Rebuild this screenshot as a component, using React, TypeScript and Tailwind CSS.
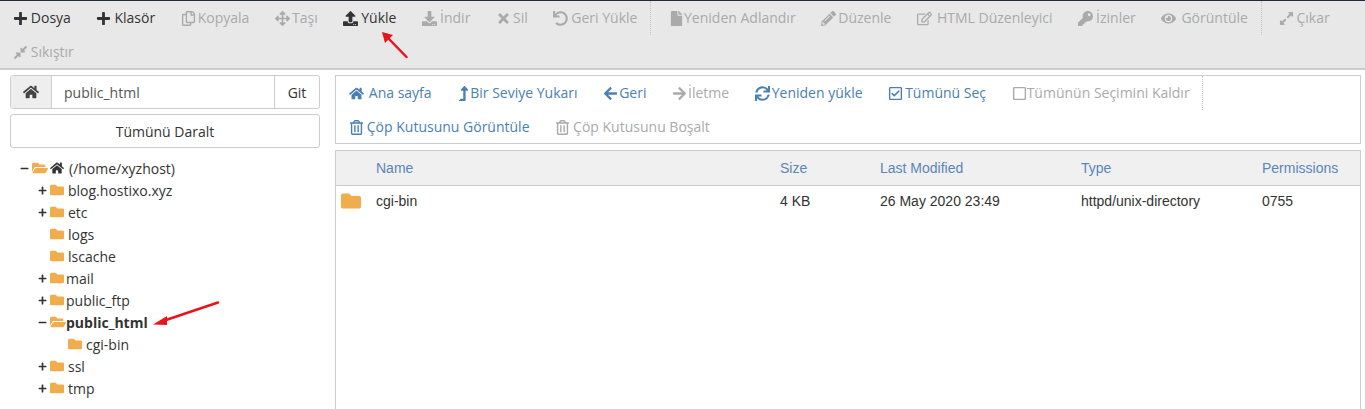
import React from "react";
import {
  FaArrowLeft,
  FaArrowRight,
  FaArrowsAlt,
  FaCompressAlt,
  FaDownload,
  FaExpandAlt,
  FaEye,
  FaFile,
  FaFolder,
  FaFolderOpen,
  FaHome,
  FaKey,
  FaLevelUpAlt,
  FaMinus,
  FaPencilAlt,
  FaPlus,
  FaRegCheckSquare,
  FaRegCopy,
  FaRegEdit,
  FaRegSquare,
  FaRegTrashAlt,
  FaSync,
  FaTimes,
  FaUndo,
  FaUpload,
} from "react-icons/fa";

type Item = { icon: React.ElementType; label: string; on?: boolean; w: number };

const topRow: Item[] = [
  { icon: FaPlus, label: "Dosya", on: true, w: 18 },
  { icon: FaPlus, label: "Klasör", on: true, w: 18 },
  { icon: FaRegCopy, label: "Kopyala", w: 17 },
  { icon: FaArrowsAlt, label: "Taşı", w: 17 },
  { icon: FaUpload, label: "Yükle", on: true, w: 18 },
  { icon: FaDownload, label: "İndir", w: 18 },
  { icon: FaTimes, label: "Sil", w: 17 },
  { icon: FaUndo, label: "Geri Yükle", w: 18 },
];
const topRow2: Item[] = [
  { icon: FaFile, label: "Yeniden Adlandır", w: 15 },
  { icon: FaPencilAlt, label: "Düzenle", w: 17 },
  { icon: FaRegEdit, label: "HTML Düzenleyici", w: 20 },
  { icon: FaKey, label: "İzinler", w: 18 },
  { icon: FaEye, label: "Görüntüle", w: 20 },
];

const navRow: Item[] = [
  { icon: FaHome, label: "Ana sayfa", on: true, w: 20 },
  { icon: FaLevelUpAlt, label: "Bir Seviye Yukarı", on: true, w: 13 },
  { icon: FaArrowLeft, label: "Geri", on: true, w: 16 },
  { icon: FaArrowRight, label: "İletme", w: 16 },
  { icon: FaSync, label: "Yeniden yükle", on: true, w: 17 },
  { icon: FaRegCheckSquare, label: "Tümünü Seç", on: true, w: 17 },
  { icon: FaRegSquare, label: "Tümünün Seçimini Kaldır", w: 15 },
];

const tree = [
  { label: "blog.hostixo.xyz", w: 18, plus: true },
  { label: "etc", w: 18, plus: true },
  { label: "logs", w: 18 },
  { label: "lscache", w: 18 },
  { label: "mail", w: 16, plus: true },
  { label: "public_ftp", w: 16, plus: true },
];

const ToolBtn = ({ item, color }: { item: Item; color: string }) => {
  const Icon = item.icon;
  return (
    <div className={`flex h-[34px] items-center px-[12.8px] text-[14px] leading-none ${item.on ? color : "text-[#aaaaaa]"}`}>
      <span className="flex shrink-0 items-center" style={{ width: item.w }}>
        <Icon className="text-[15px]" />
      </span>
      <span>{item.label}</span>
    </div>
  );
};

const Sep = () => <div className="mr-[5px] h-[34px] border-r border-dotted border-[#c4c4c4]" />;

const TreeRow = ({ label, w, plus }: { label: string; w: number; plus?: boolean }) => (
  <div className="flex h-[22px] items-center pl-[28px]">
    <span className="flex w-[12px] shrink-0 items-center">{plus && <FaPlus className="text-[9px] text-[#333333]" />}</span>
    <FaFolder className="shrink-0 text-[14px] text-[#f0ad4e]" />
    <span style={{ marginLeft: w - 14 }}>{label}</span>
  </div>
);

export default function App() {
  return (
    <div className="h-[409px] overflow-hidden bg-white font-['Open_Sans',sans-serif] text-[14px] text-[#333333]">
      {/* top toolbar */}
      <div className="flex h-[70px] flex-wrap content-start border-t border-b-2 border-t-[#1f2a3a] border-b-[#cccccc] bg-[#e8e8e8]">
        {topRow.map((item) => (
          <ToolBtn key={item.label} item={item} color="text-[#333333]" />
        ))}
        <Sep />
        {topRow2.map((item) => (
          <ToolBtn key={item.label} item={item} color="text-[#333333]" />
        ))}
        <Sep />
        <ToolBtn item={{ icon: FaExpandAlt, label: "Çıkar", w: 17 }} color="" />
        <ToolBtn item={{ icon: FaCompressAlt, label: "Sıkıştır", w: 18 }} color="" />
      </div>

      <div className="flex pt-[5px]">
        {/* left column */}
        <div className="ml-[10px] w-[310px] shrink-0">
          <div className="flex h-[34px] rounded-[3px] border border-[#cccccc]">
            <div className="flex w-[41px] items-center justify-center border-r border-[#cccccc] bg-[#eeeeee]">
              <FaHome className="text-[16px] text-[#444444]" />
            </div>
            <div className="flex flex-1 items-center pl-[12px] text-[#555555]">public_html</div>
            <div className="flex w-[45px] items-center justify-center border-l border-[#cccccc]">Git</div>
          </div>
          <div className="mt-[5px] flex h-[34px] items-center justify-center rounded-[3px] border border-[#cccccc]">Tümünü Daralt</div>

          <div className="mt-[9px]">
            <div className="flex h-[22px] items-center pl-[10px]">
              <FaMinus className="w-[12px] shrink-0 pr-[3px] text-[9px]" />
              <FaFolderOpen className="shrink-0 text-[16px] text-[#f0ad4e]" />
              <FaHome className="ml-[2px] shrink-0 text-[14px]" />
              <span className="ml-[5px]">(/home/xyzhost)</span>
            </div>
            {tree.map((row) => (
              <TreeRow key={row.label} {...row} />
            ))}
            <div className="flex h-[22px] items-center pl-[28px]">
              <FaMinus className="w-[12px] shrink-0 pr-[3px] text-[9px]" />
              <FaFolderOpen className="shrink-0 text-[16px] text-[#f0ad4e]" />
              <span className="font-bold">public_html</span>
            </div>
            <div className="flex h-[22px] items-center pl-[58px]">
              <FaFolder className="shrink-0 text-[14px] text-[#f0ad4e]" />
              <span className="ml-[4px]">cgi-bin</span>
            </div>
            <TreeRow label="ssl" w={18} plus />
            <TreeRow label="tmp" w={18} plus />
          </div>
        </div>

        {/* right column */}
        <div className="ml-[15px] w-[1026px] shrink-0">
          <div className="h-[69px] border border-[#cccccc]">
            <div className="flex">
              {navRow.map((item) => (
                <ToolBtn key={item.label} item={item} color="text-[#4a80b4]" />
              ))}
              <Sep />
            </div>
            <div className="flex">
              <ToolBtn item={{ icon: FaRegTrashAlt, label: "Çöp Kutusunu Görüntüle", on: true, w: 18 }} color="text-[#4a80b4]" />
              <ToolBtn item={{ icon: FaRegTrashAlt, label: "Çöp Kutusunu Boşalt", w: 18 }} color="" />
            </div>
          </div>

          <div className="mt-[6px] h-[300px] border border-b-0 border-[#cccccc] font-['Liberation_Sans',sans-serif]">
            <div className="grid h-[35px] grid-cols-[404px_100px_201px_181px_1fr] items-center border-b border-[#cccccc] bg-[#f0f0f0] pl-[40px] text-[#5b86b8]">
              <div>Name</div>
              <div>Size</div>
              <div>Last Modified</div>
              <div>Type</div>
              <div>Permissions</div>
            </div>
            <div className="relative grid h-[31px] grid-cols-[404px_100px_201px_181px_1fr] items-center pl-[40px] text-[#333333]">
              <FaFolder className="absolute left-[5px] top-[5px] text-[20px] text-[#f0ad4e]" />
              <div>cgi-bin</div>
              <div>4 KB</div>
              <div>26 May 2020 23:49</div>
              <div>httpd/unix-directory</div>
              <div>0755</div>
            </div>
          </div>
        </div>
      </div>

      {/* red annotation arrows */}
      <svg className="absolute left-0 top-0" width="1365" height="409" fill="none">
        <path d="M406.5 57 L389 39" stroke="#e8141c" strokeWidth="2.5" strokeLinecap="round" />
        <path d="M382 32 L393 35 L385 43 Z" fill="#e8141c" />
        <path d="M218 302.5 L163 321" stroke="#e8141c" strokeWidth="2.5" strokeLinecap="round" />
        <path d="M153 324.5 L167 316 L167 325 Z" fill="#e8141c" />
      </svg>
    </div>
  );
}
